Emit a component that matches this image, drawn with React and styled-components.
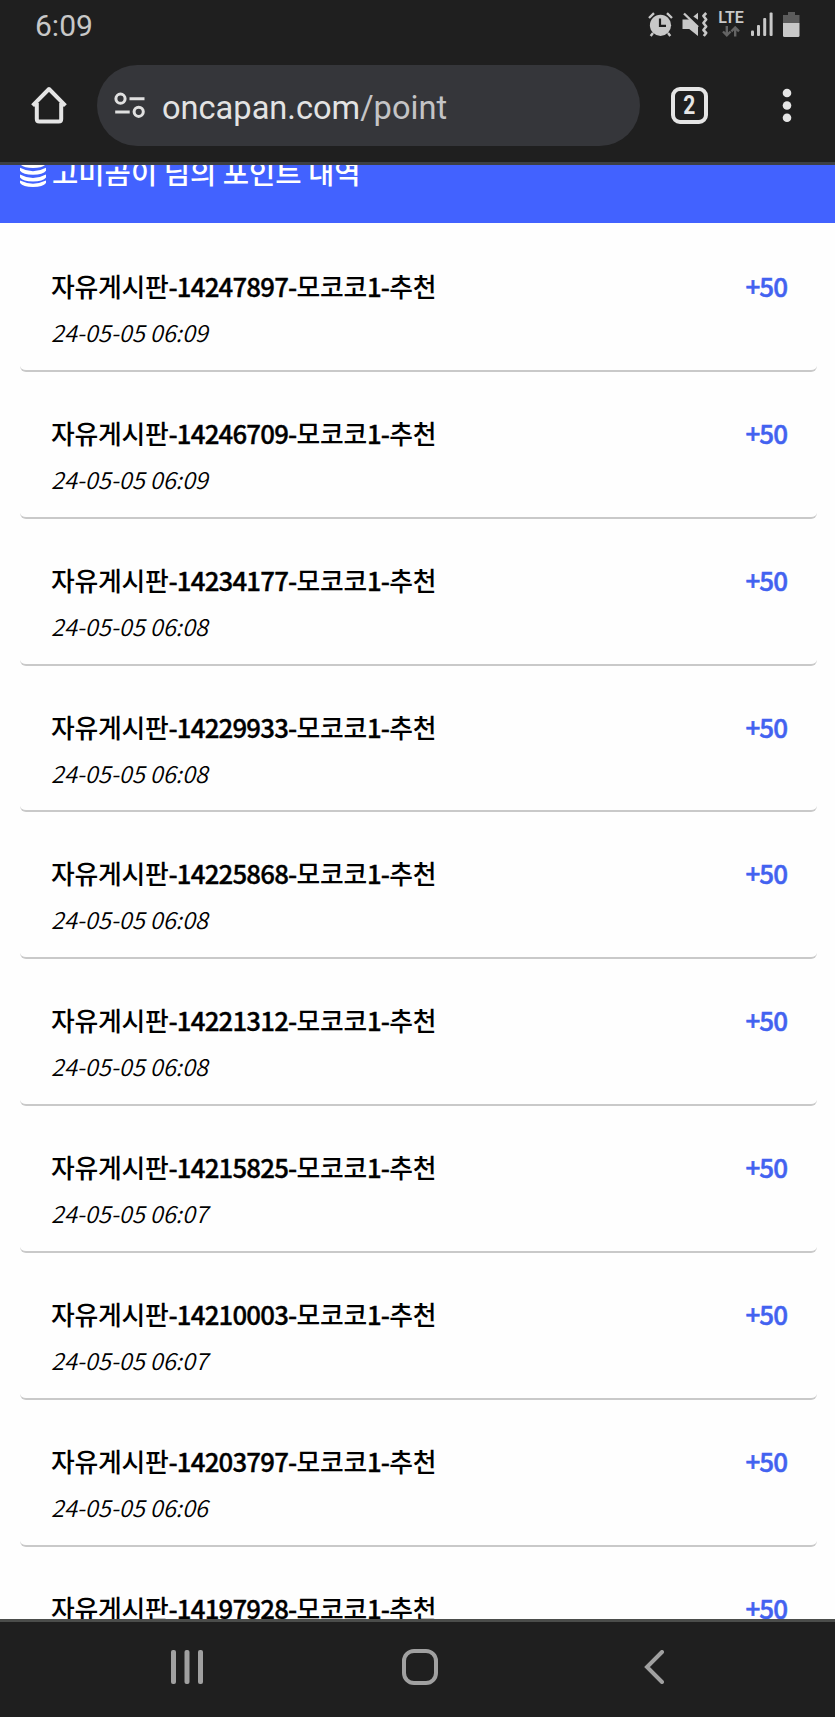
import React from "react";
import styled, { createGlobalStyle } from "styled-components";

const GlobalStyle = createGlobalStyle`
  * {
    box-sizing: border-box;
  }
  body {
    margin: 0;
    background: #fefefe;
  }
`;

const Screen = styled.div`
  display: flex;
  flex-direction: column;
  width: 835px;
  height: 1717px;
  overflow: hidden;
  background: #fefefe;
  color: #000;
  font-family: "Noto Sans CJK KR", sans-serif;
  svg {
    display: block;
    flex: none;
  }
`;

const StatusBar = styled.div`
  display: flex;
  flex: none;
  justify-content: space-between;
  height: 52px;
  padding: 0 35px;
  background: #1f1f1f;
  color: #c8c8c8;
  font-family: Roboto, sans-serif;
`;

const Clock = styled.span`
  padding-top: 8px;
  font-size: 30px;
  line-height: 35px;
`;

const StatusIcons = styled.div`
  display: flex;
  align-items: flex-start;
  padding-top: 12px;
  > svg:first-child {
    margin-right: 9px;
  }
`;

const Network = styled.div`
  display: flex;
  flex-direction: column;
  align-items: center;
  width: 26px;
  margin: 0 7px 0 10px;
  span {
    font-size: 16px;
    font-weight: 600;
    line-height: 12px;
  }
  svg {
    margin-top: 2px;
  }
`;

const Toolbar = styled.div`
  display: flex;
  flex: none;
  align-items: flex-start;
  height: 113px;
  padding: 13px 0 0 30px;
  border-bottom: 3px solid #3c3f45;
  background: #1f1f1f;
  > svg {
    margin-top: 21px;
  }
`;

const AddressBar = styled.div`
  display: flex;
  align-items: center;
  width: 543px;
  height: 81px;
  margin: 0 31px 0 29px;
  padding-left: 17px;
  border-radius: 41px;
  background: #35363a;
`;

const Url = styled.span`
  margin: 4px 0 0 16px;
  color: #e3e3e3;
  font-family: Roboto, sans-serif;
  font-size: 32.6px;
  line-height: 40px;
  span {
    color: #c4c4c6;
  }
`;

const TabCount = styled.div`
  display: flex;
  align-items: center;
  justify-content: center;
  width: 37px;
  height: 37px;
  margin: 22px 74px 0 0;
  border: 4px solid #e5e5e5;
  border-radius: 9px;
  color: #e5e5e5;
  font-family: Roboto, sans-serif;
  font-size: 25px;
  font-weight: 700;
  line-height: 28px;
  span {
    transform: scaleX(0.84);
  }
`;

const Page = styled.main`
  display: flex;
  flex: 1;
  flex-direction: column;
  min-height: 0;
  overflow: hidden;
`;

const Title = styled.header`
  display: flex;
  flex: none;
  align-items: flex-end;
  height: 58px;
  padding: 0 0 30px 20px;
  overflow: hidden;
  background: #4262ff;
  color: #fff;
  h1 {
    margin: 0 0 0 6px;
    font-size: 28.6px;
    font-weight: 500;
    line-height: 42px;
    white-space: nowrap;
  }
  svg {
    margin-bottom: 6px;
  }
`;

const List = styled.ul`
  flex: none;
  margin: 0;
  padding: 2px 18px 0 20px;
  list-style: none;
`;

const Row = styled.li`
  display: flex;
  justify-content: space-between;
  height: 146.85px;
  padding: 41px 30px 0 31px;
  border-bottom: 2px solid #c9c9c9;
  border-radius: 6px;
`;

const Subject = styled.div`
  font-size: 25.8px;
  font-weight: 500;
  letter-spacing: -0.25px;
  line-height: 40px;
  white-space: nowrap;
  span {
    letter-spacing: -0.8px;
    -webkit-text-stroke: 0.35px #000;
  }
`;

const Time = styled.div`
  margin-top: 6px;
  font-size: 23.5px;
  font-style: italic;
  font-weight: 350;
  line-height: 40px;
`;

const Amount = styled.div`
  color: #4262f0;
  font-size: 26px;
  font-weight: 500;
  letter-spacing: -1px;
  line-height: 40px;
  -webkit-text-stroke: 0.5px #4262f0;
`;

const NavBar = styled.nav`
  display: grid;
  flex: none;
  grid-template-columns: repeat(3, 233.5px);
  align-items: center;
  justify-items: center;
  height: 98px;
  padding: 0 64px 5px 70px;
  border-top: 3px solid #4b4d4b;
  background: #1f1f1f;
`;

const HomeKey = styled.div`
  width: 36px;
  height: 36px;
  border: 4.5px solid #a0a0a0;
  border-radius: 12px;
`;

const points = [
  { id: "14247897", time: "24-05-05 06:09" },
  { id: "14246709", time: "24-05-05 06:09" },
  { id: "14234177", time: "24-05-05 06:08" },
  { id: "14229933", time: "24-05-05 06:08" },
  { id: "14225868", time: "24-05-05 06:08" },
  { id: "14221312", time: "24-05-05 06:08" },
  { id: "14215825", time: "24-05-05 06:07" },
  { id: "14210003", time: "24-05-05 06:07" },
  { id: "14203797", time: "24-05-05 06:06" },
  { id: "14197928", time: "24-05-05 06:06" },
];

const AlarmIcon = () => (
  <svg width="25" height="25" viewBox="0 0 25 25" fill="none" stroke="#c8c8c8">
    <circle cx="12.5" cy="13.3" r="10.6" fill="#c8c8c8" stroke="none" />
    <path d="M1 6 6 1.2M24 6 19 1.2M5 21l-2.3 3M20 21l2.3 3" strokeWidth="2.4" />
    <path d="M12 6.5v7.3h6" stroke="#1f1f1f" strokeWidth="2.2" />
  </svg>
);

const MuteIcon = () => (
  <svg width="26" height="25" viewBox="0 0 26 25" fill="#c8c8c8">
    <path d="M.5 7.5h7L16 15v9L7.2 17H.5zM16 .8v7L11.3 4.6z" />
    <path d="M2 1.5 16 15" stroke="#c8c8c8" strokeWidth="2.4" />
    <path
      d="M24.2 1 21.4 4l2.8 3.5-2.8 3.5 2.8 3.5-2.8 3.5 2.8 3-2.4 3"
      fill="none"
      stroke="#c8c8c8"
      strokeWidth="2.6"
      strokeLinejoin="round"
    />
  </svg>
);

const HomeIcon = () => (
  <svg width="38" height="38" viewBox="0 0 38 38" fill="none" stroke="#e5e5e5">
    <path
      d="M2.6 19.6 19 3l16.4 16.6M6.8 17v16q0 2.5 2.5 2.5h19.4q2.5 0 2.5-2.5V17"
      strokeWidth="4"
      strokeLinejoin="round"
    />
  </svg>
);

const SiteIcon = () => (
  <svg width="32" height="27" viewBox="0 0 32 27" fill="none" stroke="#e0e0e0" strokeWidth="3">
    <circle cx="6.5" cy="6.7" r="4.6" />
    <circle cx="24.7" cy="19.8" r="4.6" />
    <path d="M15.5 6.7h15M1.2 20h14.5" />
  </svg>
);

const CoinsIcon = () => (
  <svg width="26" height="32" viewBox="0 0 26 32" fill="#fff">
    <ellipse cx="13" cy="4" rx="13" ry="4" />
    <path d="M0 6q13 7 26 0v3q-3 4-13 4t-13-4zM0 12.7q13 7 26 0v3q-3 4-13 4t-13-4zM0 19.4q13 7 26 0v3q-3 4-13 4t-13-4z" />
    <path d="M0 25.6q13 6.2 26 0v2.4q-3 4-13 4t-13-4z" />
  </svg>
);

const App = () => {
  return (
    <Screen>
      <GlobalStyle />
      <StatusBar>
        <Clock>6:09</Clock>
        <StatusIcons>
          <AlarmIcon />
          <MuteIcon />
          <Network>
            <span>LTE</span>
            <svg width="18" height="11" viewBox="0 0 18 11" fill="none" stroke="#646464" strokeWidth="2.4">
              <path d="M4.8 0v9M1 5.5 4.8 9.3 8.6 5.5M13.2 10.5V1.5M9.4 5.3l3.8-3.8L17 5.3" />
            </svg>
          </Network>
          <svg width="23" height="25" viewBox="0 0 23 25" fill="#c8c8c8">
            <rect x="0" y="18.5" width="3" height="5.5" rx="1" />
            <rect x="6" y="13" width="3" height="11" rx="1" />
            <rect x="12.2" y="6" width="3" height="18" rx="1" />
            <rect x="18.6" y="0.5" width="3" height="23.5" rx="1" />
          </svg>
          <svg width="26" height="25" viewBox="0 0 26 25">
            <path d="M14 0h7v3h4.5v8H9V3h5z" fill="#5c5c5c" />
            <path d="M9 11h16.5v12.5q0 1.5-1.5 1.5h-13.5Q9 25 9 23.5z" fill="#c8c8c8" />
          </svg>
        </StatusIcons>
      </StatusBar>
      <Toolbar>
        <HomeIcon />
        <AddressBar>
          <SiteIcon />
          <Url>
            oncapan.com<span>/point</span>
          </Url>
        </AddressBar>
        <TabCount>
          <span>2</span>
        </TabCount>
        <svg width="10" height="38" viewBox="0 0 10 38" fill="#e5e5e5">
          <circle cx="5" cy="7" r="4.3" />
          <circle cx="5" cy="19.5" r="4.3" />
          <circle cx="5" cy="31.8" r="4.3" />
        </svg>
      </Toolbar>
      <Page>
        <Title>
          <CoinsIcon />
          <h1>고미곰이 님의 포인트 내역</h1>
        </Title>
        <List>
          {points.map(({ id, time }) => (
            <Row key={id}>
              <div>
                <Subject>
                  자유게시판<span>-{id}-</span>모코코<span>1-</span>추천
                </Subject>
                <Time>{time}</Time>
              </div>
              <Amount>+50</Amount>
            </Row>
          ))}
        </List>
      </Page>
      <NavBar>
        <svg width="32" height="34" viewBox="0 0 32 34" fill="#a0a0a0">
          <rect x="0" width="5" height="34" rx="2" />
          <rect x="13.5" width="5" height="34" rx="2" />
          <rect x="27" width="5" height="34" rx="2" />
        </svg>
        <HomeKey />
        <svg width="20" height="34" viewBox="0 0 20 34" fill="none" stroke="#a0a0a0" strokeWidth="4">
          <path d="M18 2 3 17l15 15" strokeLinecap="round" />
        </svg>
      </NavBar>
    </Screen>
  );
};

export default App;
